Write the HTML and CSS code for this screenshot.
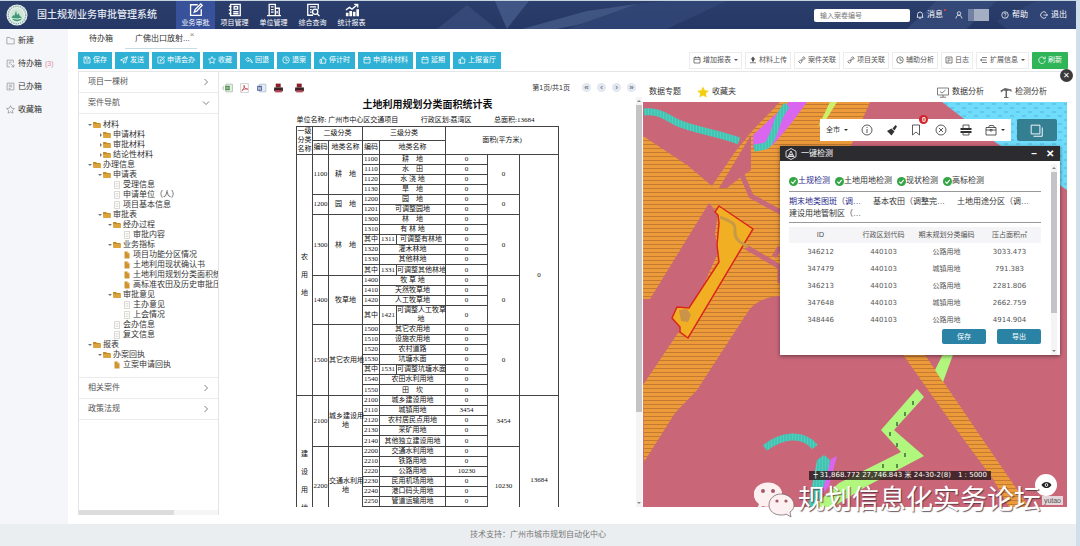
FILE: index.html
```html
<!DOCTYPE html>
<html lang="zh-CN">
<head>
  <meta charset="UTF-8">
  <meta name="viewport" content="width=device-width, initial-scale=1.0">
  <title>国土规划业务审批管理系统</title>
  <link rel="stylesheet" href="styles.css">
</head>
<body>

  <!-- Shared icons -->
  <svg class="sprite" aria-hidden="true">
    <symbol id="i-edit" viewBox="0 0 16 16"><path d="M14 7v7.2H1.8V2H10M6 10.5l1-3L13.5 1l1.6 1.6L8.8 9.4z"/></symbol>
    <symbol id="i-book" viewBox="0 0 16 16"><path d="M3 1.5h11v13H3zM1 4h3M1 8h3M1 12h3M7 4h4v3H7zM6 10h6M6 12.3h6"/></symbol>
    <symbol id="i-build" viewBox="0 0 16 16"><path d="M2.5 14.5V1.5h7v13M9.5 6H14v8.5M0 14.5h16M4.5 4.5h3M4.5 7.5h3M4.5 10.5h3M11.5 9v3"/></symbol>
    <symbol id="i-query" viewBox="0 0 16 16"><path d="M8 14H2V1.5h12V7M4.5 4.5h7M4.5 7.5h2M4.5 10.5h2"/><circle cx="10.5" cy="10" r="3"/><path d="M12.8 12.3l2.6 2.7"/></symbol>
    <symbol id="i-chart" viewBox="0 0 16 16"><path d="M1 8l4-3 3 2 6-5M10.500 1.500H14.500V5"/><path class="solid" d="M1 11h3v4H1zM5 9h3v6H5zM9 10h3v5H9zM13 7h3v8h-3z"/></symbol>
    <symbol id="i-folder" viewBox="0 0 16 16"><path d="M1.500 14V2.500h5l2 2.500h6v9z"/></symbol>
    <symbol id="i-list" viewBox="0 0 16 16"><path d="M2 2h12v12H2zM5 5.500h6M5 8.500h6M5 11.500h3"/></symbol>
    <symbol id="i-todo" viewBox="0 0 16 16"><path d="M7 14H2V2h11v5M5 5.500h5M5 8.500h3M9 9l5 5M14 9.500V14H9.500"/></symbol>
    <symbol id="i-star" viewBox="0 0 16 16"><path d="M8 1.200l2.100 4.500 4.900.6-3.600 3.400.9 4.900L8 12.200l-4.300 2.400.9-4.900L1 6.300l4.900-.6z"/></symbol>
    <symbol id="i-save" viewBox="0 0 16 16"><path d="M2 2h10l2 2v10H2zM5 2v4h6V2M5 10h6"/></symbol>
    <symbol id="i-send" viewBox="0 0 16 16"><path d="M1 8L15 1.500 11 14 7 10.500zM7 10.500L15 1.500M7 10.500V15"/></symbol>
    <symbol id="i-back" viewBox="0 0 16 16"><path d="M6 2.500L1.500 7 6 11.500V9c4 0 6 1 8.500 5C14 8 11 5.300 6 5z"/></symbol>
    <symbol id="i-clock" viewBox="0 0 16 16"><circle cx="8" cy="8" r="6.500"/><path d="M8 4v4.500h4"/></symbol>
    <symbol id="i-thumb" viewBox="0 0 16 16"><path d="M2 7h3v7.500H2zM5 7.500L8 1.500c2 0 2 2 1.500 4.500H14l-1 8.500H5"/></symbol>
    <symbol id="i-cal" viewBox="0 0 16 16"><path d="M2 3h12v11H2zM2 6.500h12M5 1v3M11 1v3"/></symbol>
    <symbol id="i-up" viewBox="0 0 16 16"><path class="solid" d="M8 1l5 6h-3v4H6V7H3z"/><path d="M2 13.500h12"/></symbol>
    <symbol id="i-link" viewBox="0 0 16 16"><path d="M7 9.500l5-5M8 5l3-3.500 3.500 3L11 8M8 8L5 8 1.500 11.500l3 3L8 11.500V8"/></symbol>
    <symbol id="i-refresh" viewBox="0 0 16 16"><path d="M13.500 5A6.500 6.500 0 1 0 14.500 9M14.500 1v4.500H10"/></symbol>
    <symbol id="i-expand" viewBox="0 0 16 16"><path d="M4 3h10M4 13h10M1 8h12M4 5.500L1 8l3 2.500"/></symbol>
    <symbol id="i-bell" viewBox="0 0 16 16"><path d="M1.500 12.500h13M3 12.500V7a5 5 0 0 1 10 0v5.500M6.500 15h3"/></symbol>
    <symbol id="i-user" viewBox="0 0 16 16"><circle cx="8" cy="5" r="3.500"/><path d="M2 15c0-8 9-8 11-3l1 3"/></symbol>
    <symbol id="i-help" viewBox="0 0 16 16"><circle cx="8" cy="8" r="6.500"/><path d="M5.800 6.500c0-3 4.400-3 4.400-.5C10.200 7.500 8 8 8 9.500M8 11v1.500"/></symbol>
    <symbol id="i-exit" viewBox="0 0 16 16"><path d="M12.500 3.500a6.500 6.500 0 1 0 0 9M7 8h8M12.500 5.500L15 8l-2.500 2.500"/></symbol>
    <symbol id="i-right" viewBox="0 0 16 16"><path d="M5 2l6 6-6 6"/></symbol>
    <symbol id="i-down" viewBox="0 0 16 16"><path d="M2 5l6 6 6-6"/></symbol>
    <symbol id="i-dir" viewBox="0 0 16 14"><path d="M0 1h6l2 2h7v10H1z" fill="#c48a26"/><path d="M2 5h14l-1 8H1z" fill="#dca53c"/></symbol>
    <symbol id="i-page" viewBox="0 0 12 16"><path d="M1 1h10v14H1z" fill="#fff" stroke="#b5b2a8"/><path d="M3 5h6M3 8h6M3 11h6" stroke="#c9c4b4"/></symbol>
    <symbol id="i-form" viewBox="0 0 12 16"><path d="M1 1h6l4 4v10H1z" fill="#cf9430"/><path d="M7 1v4h4z" fill="#f6dca6"/></symbol>
    <symbol id="i-print" viewBox="0 0 20 18"><path d="M5 1h9v7H5z" fill="#8c1f2c"/><path d="M2 8h16v7H2z" fill="#3c2226"/><path d="M4 13h12v4H4z" fill="#b84a55"/></symbol>
    <symbol id="i-check" viewBox="0 0 16 16"><circle cx="8" cy="8" r="8" fill="#34a544"/><path d="M4 8.200l3 3 5-6" fill="none" stroke="#fff" stroke-width="2"/></symbol>
  </svg>

  <div class="app">
    <!-- Header -->
    <header class="topbar">
      <svg class="logo" viewBox="0 0 24 24"><circle cx="12" cy="12" r="11.500" fill="#e8f1ee"/><circle cx="12" cy="12" r="9.500" fill="none" stroke="#7fae9f" stroke-width="1.500" stroke-dasharray="1.500 1"/><circle cx="12" cy="12" r="7.500" fill="#cfe5d8"/><path d="M6 15l2-3 1 1 2-6 1 5 2-2 1 3 3 2c-2 5-10 5-12 0z" fill="#3d9a74"/><path d="M6 16c3-1 5 2 12-1" stroke="#fff" fill="none"/></svg>
      <h1>国土规划业务审批管理系统</h1>
      <svg class="facets" viewBox="0 0 700 28" preserveAspectRatio="none"><path d="M60 28L90 4l30 24z" fill="#3b4f7f"/><path d="M118 0h34l-22 28z" fill="#4b6190"/><path d="M145 28L210 10 260 3 240 16 180 28z" fill="#4a608c"/><path d="M260 3L290 0h60l-60 28H190z" fill="#34497a"/><path d="M530 28l30-28h60l-30 28z" fill="#3a4f7f"/><path d="M620 20l40-20h40v28h-70z" fill="#33487a"/></svg>
      <nav class="mainnav">
        <a class="active" href="#"><svg class="ico"><use href="#i-edit"/></svg>业务审批</a>
        <a href="#"><svg class="ico"><use href="#i-book"/></svg>项目管理</a>
        <a href="#"><svg class="ico"><use href="#i-build"/></svg>单位管理</a>
        <a href="#"><svg class="ico"><use href="#i-query"/></svg>综合查询</a>
        <a href="#"><svg class="ico"><use href="#i-chart"/></svg>统计报表</a>
      </nav>
      <div class="tools">
        <input type="text" aria-label="案卷编号" placeholder="输入案卷编号">
        <a href="#"><svg class="ico"><use href="#i-bell"/></svg>消息<i class="dot"></i></a>
        <a href="#" aria-label="用户"><svg class="ico"><use href="#i-user"/></svg><span class="masked"></span></a>
        <a href="#"><svg class="ico"><use href="#i-help"/></svg>帮助</a>
        <a href="#"><svg class="ico"><use href="#i-exit"/></svg>退出</a>
      </div>
    </header>

    <div class="main">
      <aside class="sidebar">
        <a href="#"><svg class="ico"><use href="#i-folder"/></svg>新建</a>
        <a href="#"><svg class="ico"><use href="#i-todo"/></svg>待办箱 <em>(3)</em></a>
        <a href="#"><svg class="ico"><use href="#i-list"/></svg>已办箱</a>
        <a href="#"><svg class="ico"><use href="#i-star"/></svg>收藏箱</a>
      </aside>

      <div class="work">
        <div class="tabs">
          <a href="#">待办箱</a>
          <a class="current" href="#">广佛出口放射...<span>×</span></a>
        </div>

        <!-- Case toolbar -->
        <div class="toolbar">
          <button class="blue"><svg class="ico"><use href="#i-save"/></svg>保存</button>
          <button class="blue"><svg class="ico"><use href="#i-send"/></svg>发送</button>
          <button class="blue"><svg class="ico"><use href="#i-edit"/></svg>申请会办</button>
          <button class="blue"><svg class="ico"><use href="#i-star"/></svg>收藏</button>
          <button class="blue"><svg class="ico"><use href="#i-back"/></svg>回退</button>
          <button class="blue"><svg class="ico"><use href="#i-clock"/></svg>退案</button>
          <button class="blue"><svg class="ico"><use href="#i-thumb"/></svg>停计时</button>
          <button class="blue"><svg class="ico"><use href="#i-cal"/></svg>申请补材料</button>
          <button class="blue"><svg class="ico"><use href="#i-cal"/></svg>延期</button>
          <button class="blue"><svg class="ico"><use href="#i-thumb"/></svg>上报省厅</button>
          <span class="fill"></span>
          <button class="plain"><svg class="ico"><use href="#i-cal"/></svg>增加报表<i class="caret"></i></button>
          <button class="plain"><svg class="ico"><use href="#i-up"/></svg>材料上传</button>
          <button class="plain"><svg class="ico"><use href="#i-link"/></svg>案件关联</button>
          <button class="plain"><svg class="ico"><use href="#i-link"/></svg>项目关联</button>
          <button class="plain"><svg class="ico"><use href="#i-clock"/></svg>辅助分析</button>
          <button class="plain"><svg class="ico"><use href="#i-list"/></svg>日志</button>
          <button class="plain"><svg class="ico"><use href="#i-expand"/></svg>扩展信息<i class="caret"></i></button>
          <button class="green"><svg class="ico"><use href="#i-refresh"/></svg>刷新</button>
        </div>

        <div class="panes">
          <!-- Case navigation -->
          <section class="casenav">
            <h2>项目一棵树<svg class="ico"><use href="#i-right"/></svg></h2>
            <h2>案件导航<svg class="ico"><use href="#i-down"/></svg></h2>
            <ul class="tree">
              <li><span class="open dir"><svg><use href="#i-dir"/></svg>材料</span>
                <ul>
                  <li><span class="shut dir"><svg><use href="#i-dir"/></svg>申请材料</span></li>
                  <li><span class="shut dir"><svg><use href="#i-dir"/></svg>审批材料</span></li>
                  <li><span class="shut dir"><svg><use href="#i-dir"/></svg>结论性材料</span></li>
                </ul>
              </li>
              <li><span class="open dir"><svg><use href="#i-dir"/></svg>办理信息</span>
                <ul>
                  <li><span class="open dir"><svg><use href="#i-dir"/></svg>申请表</span>
                    <ul>
                      <li><span><svg><use href="#i-page"/></svg>受理信息</span></li>
                      <li><span><svg><use href="#i-page"/></svg>申请单位（人）</span></li>
                      <li><span><svg><use href="#i-page"/></svg>项目基本信息</span></li>
                    </ul>
                  </li>
                  <li><span class="open dir"><svg><use href="#i-dir"/></svg>审批表</span>
                    <ul>
                      <li><span class="open dir"><svg><use href="#i-dir"/></svg>经办过程</span>
                        <ul>
                          <li><span><svg><use href="#i-page"/></svg>审批内容</span></li>
                        </ul>
                      </li>
                      <li><span class="open dir"><svg><use href="#i-dir"/></svg>业务指标</span>
                        <ul>
                          <li><span><svg><use href="#i-form"/></svg>项目功能分区情况</span></li>
                          <li><span><svg><use href="#i-form"/></svg>土地利用现状确认书</span></li>
                          <li><span><svg><use href="#i-form"/></svg>土地利用规划分类面积统</span></li>
                          <li><span><svg><use href="#i-form"/></svg>高标准农田及历史审批压</span></li>
                        </ul>
                      </li>
                      <li><span class="open dir"><svg><use href="#i-dir"/></svg>审批意见</span>
                        <ul>
                          <li><span><svg><use href="#i-page"/></svg>主办意见</span></li>
                          <li><span><svg><use href="#i-page"/></svg>上会情况</span></li>
                        </ul>
                      </li>
                      <li><span><svg><use href="#i-page"/></svg>会办信息</span></li>
                      <li><span><svg><use href="#i-page"/></svg>复文信息</span></li>
                    </ul>
                  </li>
                </ul>
              </li>
              <li><span class="open dir"><svg><use href="#i-dir"/></svg>报表</span>
                <ul>
                  <li><span class="open dir"><svg><use href="#i-dir"/></svg>办案回执</span>
                    <ul>
                      <li><span><svg><use href="#i-form"/></svg>立案申请回执</span></li>
                    </ul>
                  </li>
                </ul>
              </li>
            </ul>
            <h2>相关案件<svg class="ico"><use href="#i-right"/></svg></h2>
            <h2>政策法规<svg class="ico"><use href="#i-right"/></svg></h2>
            <div class="hscroll"><i></i></div>
          </section>

          <!-- Report -->
          <section class="report">
            <div class="report-bar">
              <svg class="doc" viewBox="0 0 20 18"><path d="M4 5L1 9l3 4" fill="none" stroke="#777"/><path d="M7 2h12v14H7z" fill="#e4efe2" stroke="#8aa588"/><path d="M6 5h8v8H6z" fill="#4d8c4a"/><path d="M8 7l4 4M12 7l-4 4" stroke="#fff"/></svg>
              <svg class="doc" viewBox="0 0 20 18"><path d="M3 1h14v16H3z" fill="#fff" stroke="#aaa"/><path d="M5 14c4-3 5-7 4-10 0 5 3 7 7 7-4-1-8 0-11 3z" fill="none" stroke="#c0484c" stroke-width="1.500"/></svg>
              <svg class="doc" viewBox="0 0 20 18"><path d="M6 2h12v14H6z" fill="#e6ebf5" stroke="#93a3c4"/><path d="M2 5h9v9H2z" fill="#54699c"/><path d="M4 7l1 5 1.500-4L8 12l1-5" stroke="#fff" fill="none"/></svg>
              <svg class="doc"><use href="#i-print"/></svg>
              <svg class="doc last"><use href="#i-print"/></svg>
              <span class="fill"></span>
              <span class="pages">第1页/共1页</span>
              <button aria-label="首页">«</button>
              <button aria-label="上一页">‹</button>
              <button aria-label="下一页">›</button>
              <button aria-label="末页">»</button>
            </div>
            <div class="sheet-wrap">
              <div class="sheet">
                <h3>土地利用规划分类面积统计表</h3>
                <p><span>单位名称: 广州市中心区交通项目</span><span>行政区划:荔湾区</span><span>总面积:13684</span></p>
                <table>
                  <colgroup><col class="w16"><col class="w16"><col class="w34"><col class="w17"><col class="w17"><col class="w49"><col class="w42"><col class="w32"><col class="w39"></colgroup>
                  <thead>
                    <tr><th rowspan="2">一级<br>分类<br>名称</th><th colspan="2">二级分类</th><th colspan="3">三级分类</th><th colspan="3" rowspan="2">面积(平方米)</th></tr>
                    <tr><th>编码</th><th>地类名称</th><th>编码</th><th colspan="2">地类名称</th></tr>
                  </thead>
                  <tbody>
                    <tr><td rowspan="23" class="kind">农<br>用<br>地</td><td rowspan="4">1100</td><td rowspan="4">耕&emsp;地</td><td>1100</td><td colspan="2">耕&emsp;地</td><td>0</td><td rowspan="4">0</td><td rowspan="23">0</td></tr>
                    <tr><td>1110</td><td colspan="2">水&emsp;田</td><td>0</td></tr>
                    <tr><td>1120</td><td colspan="2">水 浇 地</td><td>0</td></tr>
                    <tr><td>1130</td><td colspan="2">旱&emsp;地</td><td>0</td></tr>
                    <tr><td rowspan="2">1200</td><td rowspan="2">园&emsp;地</td><td>1200</td><td colspan="2">园&emsp;地</td><td>0</td><td rowspan="2">0</td></tr>
                    <tr><td>1201</td><td colspan="2">可调整园地</td><td>0</td></tr>
                    <tr><td rowspan="6">1300</td><td rowspan="6">林&emsp;地</td><td>1300</td><td colspan="2">林&emsp;地</td><td>0</td><td rowspan="6">0</td></tr>
                    <tr><td>1310</td><td colspan="2">有 林 地</td><td>0</td></tr>
                    <tr><td>其中</td><td>1311</td><td>可调整有林地</td><td>0</td></tr>
                    <tr><td>1320</td><td colspan="2">灌木林地</td><td>0</td></tr>
                    <tr><td>1330</td><td colspan="2">其他林地</td><td>0</td></tr>
                    <tr class="end"><td>其中</td><td>1331</td><td>可调整其他林地</td><td>0</td></tr>
                    <tr><td rowspan="4">1400</td><td rowspan="4">牧草地</td><td>1400</td><td colspan="2">牧 草 地</td><td>0</td><td rowspan="4">0</td></tr>
                    <tr><td>1410</td><td colspan="2">天然牧草地</td><td>0</td></tr>
                    <tr><td>1420</td><td colspan="2">人工牧草地</td><td>0</td></tr>
                    <tr class="tall"><td>其中</td><td>1421</td><td>可调整人工牧草<br>地</td><td>0</td></tr>
                    <tr><td rowspan="7">1500</td><td rowspan="7">其它农用地</td><td>1500</td><td colspan="2">其它农用地</td><td>0</td><td rowspan="7">0</td></tr>
                    <tr><td>1510</td><td colspan="2">设施农用地</td><td>0</td></tr>
                    <tr><td>1520</td><td colspan="2">农村道路</td><td>0</td></tr>
                    <tr><td>1530</td><td colspan="2">坑塘水面</td><td>0</td></tr>
                    <tr><td>其中</td><td>1531</td><td>可调整坑塘水面</td><td>0</td></tr>
                    <tr><td>1540</td><td colspan="2">农田水利用地</td><td>0</td></tr>
                    <tr class="end"><td>1550</td><td colspan="2">田&emsp;坎</td><td>0</td></tr>
                    <tr><td rowspan="13" class="kind">建<br>设<br>用<br>地</td><td rowspan="5">2100</td><td rowspan="5">城乡建设用<br>地</td><td>2100</td><td colspan="2">城乡建设用地</td><td>0</td><td rowspan="5">3454</td><td rowspan="13">13684</td></tr>
                    <tr><td>2110</td><td colspan="2">城镇用地</td><td>3454</td></tr>
                    <tr><td>2120</td><td colspan="2">农村居民点用地</td><td>0</td></tr>
                    <tr><td>2130</td><td colspan="2">采矿用地</td><td>0</td></tr>
                    <tr class="end"><td>2140</td><td colspan="2">其他独立建设用地</td><td>0</td></tr>
                    <tr><td rowspan="7">2200</td><td rowspan="7">交通水利用<br>地</td><td>2200</td><td colspan="2">交通水利用地</td><td>0</td><td rowspan="7">10230</td></tr>
                    <tr><td>2210</td><td colspan="2">铁路用地</td><td>0</td></tr>
                    <tr><td>2220</td><td colspan="2">公路用地</td><td>10230</td></tr>
                    <tr><td>2230</td><td colspan="2">民用机场用地</td><td>0</td></tr>
                    <tr><td>2240</td><td colspan="2">港口码头用地</td><td>0</td></tr>
                    <tr><td>2250</td><td colspan="2">管道运输用地</td><td>0</td></tr>
                    <tr class="tall"><td></td><td colspan="2"></td><td></td></tr>
                    <tr class="rest"><td></td><td></td><td></td><td colspan="2"></td><td></td><td></td></tr>
                  </tbody>
                </table>
              </div>
              <div class="vscroll"><b></b><i></i><b class="down"></b></div>
            </div>
          </section>

          <!-- Map -->
          <section class="mapbox">
            <button class="close" aria-label="关闭">✕</button>
            <div class="map-head">
              <a href="#">数据专题</a>
              <a href="#"><svg class="fav" viewBox="0 0 16 16"><path d="M8 .5l2.400 5 5.400.7-4 3.700 1 5.400L8 12.700l-4.800 2.600 1-5.400-4-3.700 5.400-.7z" fill="#f5cf13"/></svg>收藏夹</a>
              <span class="fill"></span>
              <a href="#"><svg class="big" viewBox="0 0 24 22"><path d="M1 2h22v14H1zM12 16v4M6 20.500h12M6 9l4 3 7-6" fill="none" stroke="#555" stroke-width="1.500"/></svg>数据分析</a>
              <a href="#"><svg class="big" viewBox="0 0 24 22"><path d="M1 7l9-5 13 3v5l-4-3-5 1v12h3v2H8v-2h3V8L7 7l-5 4z" fill="#666"/></svg>检测分析</a>
            </div>
            <div class="map">
              <svg class="canvas" viewBox="0 0 424 405" preserveAspectRatio="xMinYMin slice">
                <defs>
                  <pattern id="farm" width="8" height="4" patternUnits="userSpaceOnUse"><path d="M0 0h8v4H0z" fill="#ed9a3b"/><path d="M0 2.500h8" stroke="#b8752f" stroke-width=".8"/></pattern>
                  <pattern id="water" width="12" height="8" patternUnits="userSpaceOnUse"><path d="M0 0h12v8H0z" fill="#70dcfb"/><path d="M1 2h4M7 6h4" stroke="#4aa9cc" stroke-width=".8"/></pattern>
                  <pattern id="stripe" width="3" height="3" patternUnits="userSpaceOnUse"><path d="M0 0h3v3H0z" fill="#4fd0bd"/><path d="M1 0v3" stroke="#36a99c" stroke-width=".7"/></pattern>
                </defs>
                <path d="M0 0h424v405H0z" fill="#c96779"/>
                <path d="M0 34L44 63 69 84 92 50 110 28 137 0H227L207 46 200 194H134C122 196 112 199 104 211L54 288 32 311 1 360 0 283 37 228 50 206 75 151 72 131 75 112 66 101 7 197H0z" fill="url(#farm)"/>
                <path d="M108 33V68L98 75 84 86H76z" fill="#c96779"/>
                <path d="M99 73l9 21 31 17M103 145l34 20v16M137 145l-6 10" fill="none" stroke="#c7697a" stroke-width="5"/>
                <path d="M146 0h18l-17 23-17 20-20 3V33z" fill="#da66ef"/>
                <path d="M1 10c14-2 22 5 34 11 20 8 40 10 61 18" fill="none" stroke="url(#stripe)" stroke-width="7"/>
                <path d="M144 3c-12 14-9 22-17 36-2 6-8 6-16 7" fill="none" stroke="url(#stripe)" stroke-width="7"/>
                <path d="M187 0h7l-10 16-9 9z" fill="#cdf06a"/>
                <path d="M299 0H424V88L352 40 320 16z" fill="url(#water)"/>
                <path d="M76 104l34 23-65 109-8-6v-5l-8-9 5-11 12 1 30-46-2-17 2-22-1-8-3-3z" fill="#f1b024" stroke="#d9261c" stroke-width="1.500"/>
                <path d="M77 115c8 4 16 4 15 14s8 12 13 16" fill="none" stroke="#c79a45" stroke-width="3"/>
                <path d="M36 208l8-1 4 6-3 7-7-1z" fill="#cb9349"/>
                <path d="M256 247h22l60 88 39 57 9 13h-20l-16-28-40-54z" fill="url(#farm)"/>
                <path d="M301 250h10l-11 30-8-12z" fill="#b1f77d"/>
                <path d="M274 287l7 8-30 33 30 26-57 30-34 21h-20l26-24 62-31-20-22z" fill="#b1f77d"/>
                <path d="M270 299v4M262 310v4M254 320v4M247 330v4M254 341v4M262 351v4M254 362v4M240 362v4" stroke="#3d6b3a" stroke-width="1.500"/>
                <path d="M122 346c16-13 38-16 50-1" fill="none" stroke="url(#stripe)" stroke-width="7"/>
                <path d="M174 358l7-5 6 5-3 26-12 21h-7z" fill="url(#stripe)"/>
                <path d="M188 357l6-3-8 30-8 10z" fill="#da66ef"/>
              </svg>

              <div class="map-tools">
                <label class="area"><select aria-label="区域"><option>全市</option></select><i class="caret"></i></label>
                <button aria-label="信息"><svg viewBox="0 0 24 24"><circle cx="12" cy="12" r="10"/><path d="M12 6v2M12 10v8"/></svg></button>
                <button aria-label="清除"><svg viewBox="0 0 24 24"><path class="solid" d="M2 14l9-5 6 6-6 8zM13 9l6-7 3 3-5 8z"/></svg></button>
                <button aria-label="书签"><svg viewBox="0 0 24 24"><path d="M5 2h14v20l-7-6-7 6z"/></svg><b class="badge">0</b></button>
                <button aria-label="取消"><svg viewBox="0 0 24 24"><circle cx="12" cy="12" r="10"/><path d="M8 8l8 8M16 8l-8 8"/></svg></button>
                <button aria-label="打印"><svg viewBox="0 0 24 24"><path d="M6 8V2h12v6M6 18v4h12v-4"/><path class="solid" d="M1 8h22v4H1zM1 14h22v4H1z"/></svg></button>
                <button class="case" aria-label="工具箱"><svg viewBox="0 0 24 24"><path d="M2 7h20v15H2zM7 7l2-4h8l2 4M2 12h8M14 12h8M10 11h4v3h-4z"/></svg><i class="caret"></i></button>
              </div>
              <button class="layers" aria-label="图层"><svg viewBox="0 0 24 24"><path d="M2 2h15v15H2zM21 6v15H6" /></svg></button>

              <!-- Check dialog -->
              <div class="dialog">
                <div class="dialog-title">
                  <svg viewBox="0 0 24 24"><path d="M12 1l10 5.500v11L12 23 2 17.500v-11zM12 6l5 10H7zM9 13h6M5 17h14"/></svg>
                  <span>一键检测</span>
                  <button aria-label="最小化">–</button>
                  <button aria-label="关闭">✕</button>
                </div>
                <div class="dialog-body">
                  <div class="dialog-main">
                    <div class="checks">
                      <a class="on" href="#"><svg><use href="#i-check"/></svg>土规检测</a>
                      <a href="#"><svg><use href="#i-check"/></svg>土地用地检测</a>
                      <a href="#"><svg><use href="#i-check"/></svg>现状检测</a>
                      <a href="#"><svg><use href="#i-check"/></svg>高标检测</a>
                    </div>
                    <div class="layer-links">
                      <a class="on" href="#">期末地类图斑（调…</a>
                      <a href="#">基本农田（调整完…</a>
                      <a href="#">土地用途分区（调…</a>
                      <a href="#">建设用地管制区（…</a>
                    </div>
                    <table class="result">
                      <thead><tr><th>ID</th><th>行政区划代码</th><th>期末规划分类编码</th><th>压占面积㎡</th></tr></thead>
                      <tbody>
                        <tr><td>346212</td><td>440103</td><td>公路用地</td><td>3033.473</td></tr>
                        <tr><td>347479</td><td>440103</td><td>城镇用地</td><td>791.383</td></tr>
                        <tr><td>346213</td><td>440103</td><td>公路用地</td><td>2281.806</td></tr>
                        <tr><td>347648</td><td>440103</td><td>城镇用地</td><td>2662.759</td></tr>
                        <tr><td>348446</td><td>440103</td><td>公路用地</td><td>4914.904</td></tr>
                      </tbody>
                    </table>
                    <div class="actions"><button>保存</button><button>导出</button></div>
                  </div>
                  <div class="vscroll"><b></b><i></i><b class="down"></b></div>
                </div>
              </div>

              <div class="coords">┼ 31,868.772 27,746.843 米 24-30-2(8)&emsp;1 : 5000</div>
              <div class="eye"><svg viewBox="0 0 24 16"><path d="M1 8C6-1 18-1 23 8 18 17 6 17 1 8z" fill="#222"/><circle cx="12" cy="8" r="4" fill="#fff"/><circle cx="12" cy="8" r="2" fill="#222"/></svg></div>
              <span class="name-tag">yutao</span>

              <div class="account">
                <svg viewBox="0 0 42 37"><path d="M15 1C7 1 1 6 1 13c0 4 2 7 5 9l-2 5 6-3c2 1 6 1 8 0z" fill="#fdf0f1"/><ellipse cx="15" cy="12" rx="14" ry="11.500" fill="#fdf0f1"/><circle cx="10" cy="9" r="2" fill="#a45a66"/><circle cx="20" cy="9" r="2" fill="#a45a66"/><path d="M28 12c-7 0-12 5-12 11s5 10 12 10c2 0 4 0 5-1l5 3-1-5c3-2 4-4 4-7 0-6-6-11-13-11z" fill="#fdf0f1" stroke="#7a6a6e" stroke-width=".8"/><circle cx="24" cy="19" r="1.600" fill="#a45a66"/><circle cx="33" cy="19" r="1.600" fill="#a45a66"/></svg>
                <span>规划信息化实务论坛</span>
              </div>
            </div>
          </section>
        </div>
      </div>
    </div>

    <footer>技术支持：广州市城市规划自动化中心</footer>
  </div>

</body>
</html>
```
FILE: styles.css
```css
/* Reset */
* {
  margin: 0;
  padding: 0;
  box-sizing: border-box;
}

body {
  font-family: "Liberation Sans", "Noto Sans CJK SC", sans-serif;
  font-size: 8px;
  line-height: 10px;
  color: #333;
  background: #fff;
}

a {
  color: inherit;
  text-decoration: none;
}

ul {
  list-style: none;
}

button,
input,
select {
  font: inherit;
  color: inherit;
  border: none;
  background: none;
}

button {
  cursor: pointer;
}

.sprite {
  position: absolute;
  width: 0;
  height: 0;
}

.ico {
  width: 8px;
  height: 8px;
  flex: none;
  fill: none;
  stroke: currentColor;
  stroke-width: 1.5;
}

.solid {
  fill: currentColor;
  stroke: none;
}

.fill {
  flex: 1;
}

.caret {
  border: 2px solid transparent;
  border-top-color: currentColor;
  border-bottom: none;
  margin-left: 1px;
}

.app {
  display: flex;
  flex-direction: column;
  height: 100vh;
  border-top: 1px solid #c5d3df;
  border-right: 4px solid #cfe0ec;
}

/* Header */
.topbar {
  position: relative;
  display: flex;
  align-items: center;
  height: 28px;
  flex: none;
  padding: 0 9px 0 6px;
  color: #fff;
  background: linear-gradient(#2c3f6c, #243765);
}

.facets {
  position: absolute;
  right: 0;
  top: 0;
  width: 65%;
  height: 100%;
  opacity: 0.7;
}

.logo {
  width: 22px;
  height: 22px;
}

.topbar h1 {
  width: 139px;
  margin-left: 9px;
  font-size: 10px;
  font-weight: 500;
  color: #e3e8f2;
}

.mainnav {
  position: relative;
  display: flex;
  height: 100%;
}

.mainnav a {
  display: flex;
  flex-direction: column;
  align-items: center;
  gap: 1px;
  width: 39px;
  padding-top: 2px;
  font-size: 7px;
  line-height: 9px;
}

.mainnav .ico {
  width: 14px;
  height: 14px;
}

.mainnav .active {
  background: #37529b;
}

.tools {
  position: relative;
  display: flex;
  align-items: center;
  gap: 12px;
  margin-left: auto;
}

.tools input {
  width: 96px;
  height: 13px;
  padding: 0 6px;
  font-size: 7px;
  color: #555;
  background: #fff;
  border-radius: 2px;
  margin-right: -6px;
}

.tools input::placeholder {
  color: #777;
}

.tools a {
  position: relative;
  display: flex;
  align-items: center;
  gap: 3px;
}

.dot {
  position: absolute;
  top: -1px;
  right: -3px;
  width: 2px;
  height: 2px;
  border-radius: 50%;
  background: #e5473f;
}

.masked {
  width: 21px;
  height: 12px;
  margin-left: 2px;
  background: linear-gradient(90deg, #7382a2 30%, #a5afc3 30%);
}

/* Sidebar */
.main {
  display: flex;
  flex: 1;
  min-height: 0;
}

.sidebar {
  width: 68px;
  flex: none;
  background: #f5f6f9;
}

.sidebar a {
  display: flex;
  align-items: center;
  gap: 3px;
  height: 23px;
  padding-left: 6px;
}

.sidebar .ico {
  width: 9px;
  height: 9px;
  stroke: #888;
  stroke-width: 1.2;
}

.sidebar em {
  font-size: 7px;
  font-style: normal;
  color: #e08a9c;
}

/* Tabs and toolbar */
.work {
  display: flex;
  flex-direction: column;
  flex: 1;
  min-width: 0;
  padding: 0 8px 9px 10px;
}

.tabs {
  display: flex;
  gap: 12px;
  height: 20px;
  flex: none;
  padding-left: 11px;
}

.tabs a {
  line-height: 20px;
}

.tabs .current {
  display: flex;
  padding: 0 3px 0 10px;
  border-bottom: 1px solid #c5dbe8;
}

.tabs .current span {
  line-height: 12px;
  color: #888;
}

.toolbar {
  display: flex;
  align-items: center;
  gap: 3px;
  height: 23px;
  flex: none;
  border-bottom: 1px solid #e3e5e8;
}

.toolbar button {
  display: flex;
  align-items: center;
  gap: 2px;
  height: 17px;
  padding: 0 5px;
  font-size: 7px;
  white-space: nowrap;
}

.toolbar .blue {
  color: #fff;
  background: #2fb1d5;
}

.toolbar .plain {
  padding: 0 3px;
  color: #555;
  border: 1px solid #ececec;
}

.toolbar .green {
  padding: 0 6px;
  color: #fff;
  background: #2fb457;
  border-radius: 1px;
}

.panes {
  display: flex;
  flex: 1;
  min-height: 0;
}

/* Case navigation */
.casenav {
  display: flex;
  flex-direction: column;
  width: 141px;
  flex: none;
  overflow: hidden;
  border: solid #e2e4e8;
  border-width: 0 1px;
}

.casenav h2 {
  display: flex;
  align-items: center;
  justify-content: space-between;
  height: 21px;
  flex: none;
  padding: 0 8px 0 9px;
  font-size: 8px;
  font-weight: normal;
  color: #555;
  border-bottom: 1px solid #ebebed;
}

.tree {
  padding: 6px 0 7px 9px;
  border-bottom: 1px solid #ebebed;
}

.tree ul {
  padding-left: 10px;
}

.tree span {
  display: flex;
  align-items: center;
  height: 10px;
  white-space: nowrap;
}

.tree span::before {
  content: "";
  width: 5px;
  flex: none;
}

.tree span.open::before {
  width: 0;
  margin-right: 1px;
  border: 2px solid transparent;
  border-top-color: #777;
  border-bottom: none;
}

.tree span.shut::before {
  width: 0;
  margin: 0 1px 0 2px;
  border: 2px solid transparent;
  border-left-color: #777;
  border-right: none;
}

.tree svg {
  width: 8px;
  height: 8px;
  flex: none;
  margin-right: 2px;
}

.hscroll {
  margin-top: auto;
  height: 5px;
  flex: none;
  background: #f5f5f5;
}

.hscroll i {
  display: block;
  width: 68%;
  height: 5px;
  background: #dcdcdc;
}

/* Report */
.report {
  display: flex;
  flex-direction: column;
  width: 423px;
  flex: none;
  padding-bottom: 8px;
}

.report-bar {
  display: flex;
  align-items: center;
  gap: 6px;
  height: 25px;
  flex: none;
  padding: 6px 6px 0 3px;
}

.doc {
  width: 11px;
  height: 10px;
}

.doc.last {
  margin-left: 4px;
}

.pages {
  margin-right: 6px;
  font-size: 7px;
}

.report-bar button {
  width: 9px;
  height: 9px;
  border-radius: 50%;
  line-height: 8px;
  color: #456;
  background: #e3e7ef;
}

.sheet-wrap {
  display: flex;
  flex: 1;
  min-height: 0;
}

.sheet {
  flex: 1;
  overflow: hidden;
  color: #111;
  font-family: "Liberation Serif", "Noto Sans CJK SC", serif;
}

.sheet h3 {
  height: 18px;
  line-height: 16px;
  font-size: 10px;
  text-align: center;
}

.sheet p {
  display: flex;
  justify-content: space-between;
  width: 262px;
  margin: 0 auto;
  padding-right: 24px;
  font-size: 7px;
  line-height: 11px;
}

.sheet table {
  width: 263px;
  margin: 0 auto;
  table-layout: fixed;
  border-collapse: collapse;
  font-size: 7px;
  line-height: 9px;
  text-align: center;
  white-space: nowrap;
}

.sheet th,
.sheet td {
  border: 1px solid #444;
  font-weight: normal;
}

.sheet td {
  height: 10px;
}

.sheet th {
  height: 14px;
}

.sheet .kind {
  line-height: 18px;
}

.sheet .end td:not([rowspan]) {
  height: 11px;
}

.sheet .tall td {
  height: 19px;
}

.sheet .rest td {
  height: 40px;
}

.w16 { width: 16px; }
.w17 { width: 17px; }
.w32 { width: 32px; }
.w34 { width: 34px; }
.w39 { width: 39px; }
.w42 { width: 42px; }
.w49 { width: 49px; }

.vscroll {
  display: flex;
  flex-direction: column;
  align-items: center;
  gap: 3px;
  width: 6px;
  padding: 3px 0;
  background: #f4f4f4;
}

.vscroll b {
  border: 2px solid transparent;
  border-bottom-color: #888;
  border-top: none;
}

.vscroll .down {
  border: 2px solid transparent;
  border-top-color: #888;
  border-bottom: none;
  margin-top: auto;
}

.vscroll i {
  width: 6px;
  height: 76%;
  background: #c4c4c6;
}

/* Map */
.mapbox {
  position: relative;
  display: flex;
  flex-direction: column;
  flex: 1;
  min-width: 0;
  padding: 8px 1px 8px 1px;
}

.close {
  position: absolute;
  right: -5px;
  top: -3px;
  width: 13px;
  height: 13px;
  border-radius: 50%;
  line-height: 13px;
  color: #fff;
  background: #3b3b3d;
}

.map-head {
  display: flex;
  align-items: center;
  gap: 16px;
  height: 22px;
  flex: none;
  padding: 2px 20px 0 6px;
}

.map-head a {
  display: flex;
  align-items: center;
  gap: 3px;
}

.fav {
  width: 12px;
  height: 12px;
}

.big {
  width: 12px;
  height: 11px;
}

.map {
  position: relative;
  flex: 1;
  min-height: 0;
}

.canvas {
  display: block;
  width: 100%;
  height: 100%;
}

.map-tools {
  position: absolute;
  right: 56px;
  top: 17px;
  display: flex;
  align-items: center;
  justify-content: space-between;
  width: 191px;
  height: 22px;
  padding: 0 6px;
  background: #fff;
}

.area {
  display: flex;
  align-items: center;
  gap: 3px;
}

.area select {
  appearance: none;
  font-size: 7px;
}

.map-tools button {
  position: relative;
  display: flex;
  align-items: center;
  gap: 3px;
}

.map-tools svg,
.layers svg,
.dialog-title svg {
  width: 12px;
  height: 12px;
  fill: none;
  stroke: currentColor;
  stroke-width: 1.6;
}

.map-tools .solid {
  fill: #333;
}

.badge {
  position: absolute;
  left: 9px;
  top: -9px;
  width: 9px;
  height: 9px;
  border-radius: 50%;
  font-size: 7px;
  line-height: 9px;
  color: #fff;
  background: #d3232a;
}

.layers {
  position: absolute;
  right: 10px;
  top: 17px;
  width: 40px;
  height: 22px;
  color: #fff;
  background: #347f92;
  border-radius: 2px;
}

.layers svg {
  width: 14px;
  height: 14px;
  margin-top: 4px;
}

/* Dialog */
.dialog {
  position: absolute;
  right: 7px;
  top: 44px;
  width: 280px;
  background: #fff;
  box-shadow: 0 1px 4px rgba(0, 0, 0, 0.5);
}

.dialog-title {
  display: flex;
  align-items: center;
  gap: 4px;
  height: 15px;
  padding: 0 4px 0 5px;
  color: #fff;
  background: #2c2c30;
}

.dialog-title span {
  flex: 1;
}

.dialog-title button {
  width: 12px;
  font-size: 10px;
  font-weight: bold;
}

.dialog-body {
  display: flex;
  gap: 10px;
  padding: 3px 3px 0 9px;
}

.dialog-main {
  flex: 1;
  padding: 10px 0 11px;
}

.checks {
  display: flex;
  gap: 5px;
  padding: 2px 0 5px;
  border-bottom: 1px solid #999;
}

.checks a {
  display: flex;
  align-items: center;
}

.checks svg {
  width: 9px;
  height: 9px;
}

.checks .on,
.layer-links .on {
  color: #2b2b8c;
}

.layer-links {
  display: grid;
  grid-template-columns: repeat(3, 1fr);
  gap: 2px 0;
  padding: 5px 0 3px;
  border-bottom: 1px solid #999;
}

.layer-links a {
  white-space: nowrap;
}

.result {
  width: 100%;
  margin-top: 4px;
  table-layout: fixed;
  border-collapse: collapse;
  font-family: "DejaVu Sans", "Noto Sans CJK SC", sans-serif;
  font-size: 7px;
  text-align: center;
  color: #555;
}

.result th {
  height: 16px;
  font-weight: normal;
  background: #f5f5f7;
}

.result td {
  height: 17px;
}

.actions {
  display: flex;
  justify-content: flex-end;
  gap: 11px;
  margin-top: 1px;
}

.actions button {
  width: 44px;
  height: 15px;
  font-size: 7px;
  color: #fff;
  background: #2a82a5;
  border-radius: 2px;
}

/* Map overlays */
.coords {
  position: absolute;
  right: 76px;
  bottom: 27px;
  padding: 0 4px;
  font-family: "DejaVu Sans", "Noto Sans CJK SC", sans-serif;
  font-size: 7px;
  line-height: 9px;
  color: #fff;
  background: rgba(40, 25, 25, 0.8);
}

.eye {
  position: absolute;
  right: 10px;
  bottom: 11px;
  display: flex;
  align-items: center;
  justify-content: center;
  width: 22px;
  height: 22px;
  border-radius: 50%;
  background: #fff;
}

.eye svg {
  width: 11px;
  height: 8px;
}

.name-tag {
  position: absolute;
  right: 4px;
  bottom: 2px;
  padding: 0 2px;
  font-size: 7px;
  line-height: 9px;
  color: #555;
  background: #e3d5d9;
}

.account {
  position: absolute;
  right: 26px;
  bottom: -12px;
  display: flex;
  align-items: center;
  gap: 3px;
  font-size: 27px;
  line-height: 38px;
  white-space: nowrap;
  color: #fff;
  text-shadow: 1px 1px 1px rgba(70, 50, 60, 0.8);
}

.account svg {
  width: 42px;
  height: 37px;
}

/* Footer */
footer {
  height: 22px;
  flex: none;
  line-height: 22px;
  text-align: center;
  color: #777;
  background: #ebeef0;
}
```
